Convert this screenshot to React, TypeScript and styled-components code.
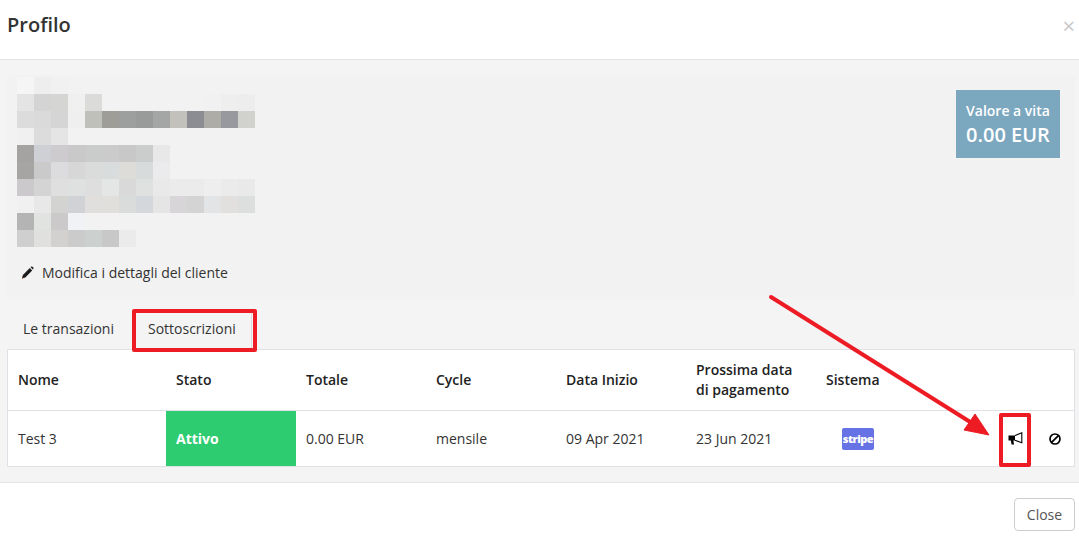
import React from "react";
import styled, { createGlobalStyle } from "styled-components";

const Global = createGlobalStyle`
  *, *::before, *::after { box-sizing: border-box; }
  html, body { margin: 0; padding: 0; background: #fff; }
  body { font-family: "Open Sans", "Liberation Sans", sans-serif; color: #2b2b2b; font-size: 14px; }
`;
const Modal = styled.div`
  position: relative;
  width: 1079px;
  height: 539px;
  overflow: hidden;
  display: flex;
  flex-direction: column;
  background: #fff;
`;
const Header = styled.header`
  height: 60px;
  flex: none;
  border-bottom: 1px solid #e5e5e5;
  display: flex;
  align-items: center;
  justify-content: space-between;
  padding: 0 4px 10px 7px;
`;
const Title = styled.h4`
  margin: 0;
  font-size: 20px;
  font-weight: 600;
  color: #333;
`;
const Dismiss = styled.span`
  font-size: 22px;
  line-height: 1;
  color: #c8c8c8;
`;
const Body = styled.main`
  height: 423px;
  flex: none;
  background: #f4f4f4;
  border-bottom: 1px solid #e5e5e5;
  padding: 15px 4px 0 7px;
  display: flex;
  flex-direction: column;
`;
const Customer = styled.section`
  height: 222px;
  flex: none;
  background: #f2f2f2;
  display: flex;
  justify-content: space-between;
  align-items: flex-start;
  padding: 2px 15px 0 10px;
`;
const CustomerInfo = styled.div`
  display: flex;
  flex-direction: column;
`;
const EditLink = styled.a`
  display: flex;
  align-items: center;
  gap: 8px;
  margin: 16px 0 0 4px;
  font-size: 14px;
  line-height: 19px;
  color: #333;
`;
const ValueBox = styled.div`
  width: 104px;
  height: 68px;
  margin-top: 13px;
  padding-bottom: 1px;
  background: #7ba7bf;
  color: #fff;
  text-align: center;
  font-weight: 600;
  display: flex;
  flex-direction: column;
  justify-content: center;
`;
const ValueLabel = styled.div`
  font-size: 14px;
  line-height: 21px;
`;
const ValueAmount = styled.div`
  font-size: 20px;
  line-height: 27px;
`;
const Tabs = styled.nav`
  height: 52px;
  flex: none;
  display: flex;
  align-items: flex-end;
`;
const Tab = styled.div<{ $active?: boolean }>`
  height: 40px;
  display: flex;
  align-items: center;
  padding: 0 15px 1px ${(p) => (p.$active ? "17px" : "16px")};
  margin-left: ${(p) => (p.$active ? "2px" : "0")};
  font-size: 14px;
  color: #333;
  border-right: ${(p) => (p.$active ? "1px solid #dcdce0" : "none")};
`;
const Table = styled.div`
  width: 1068px;
  height: 118px;
  flex: none;
  background: #fff;
  border: 1px solid #e0e0e6;
  display: flex;
  flex-direction: column;
`;
const columns = "158px 130px 130px 130px 130px 130px 130px 1fr";
const HeadRow = styled.div`
  height: 61px;
  flex: none;
  display: grid;
  grid-template-columns: ${columns};
  align-items: center;
  border-bottom: 1px solid #e0e0e6;
  font-size: 14px;
  font-weight: 600;
  color: #222;
`;
const DataRow = styled.div`
  flex: 1;
  display: grid;
  grid-template-columns: ${columns};
  align-items: center;
  font-size: 14px;
  color: #333;
`;
const HeadCell = styled.div`
  padding-left: 10px;
  line-height: 20px;
`;
const Cell = styled.div`
  padding-left: 10px;
`;
const StatusCell = styled.div`
  align-self: stretch;
  background: #2ecc71;
  color: #fff;
  font-weight: 700;
  display: flex;
  align-items: center;
  padding-left: 10px;
`;
const StripeBadge = styled.span`
  display: inline-flex;
  align-items: center;
  justify-content: center;
  width: 32px;
  height: 22px;
  margin-left: 16px;
  border-radius: 2px;
  background: #6772e5;
  color: #fff;
  font-family: "Open Sans", sans-serif;
  font-size: 11px;
  font-weight: 800;
  letter-spacing: -0.5px;
`;
const Actions = styled.div`
  display: flex;
  align-items: center;
  justify-content: flex-end;
  gap: 26px;
  padding-right: 13px;
`;
const Footer = styled.footer`
  flex: 1;
  display: flex;
  justify-content: flex-end;
  align-items: flex-start;
  padding: 15px 4px 0 0;
`;
const CloseButton = styled.button`
  width: 61px;
  height: 33px;
  padding: 0;
  background: #fff;
  border: 1px solid #ccc;
  border-radius: 4px;
  font: 400 14px "Open Sans", sans-serif;
  color: #555;
`;
const Annotation = styled.div<{ $x: number; $y: number; $w: number; $h: number }>`
  position: absolute;
  left: ${(p) => p.$x}px;
  top: ${(p) => p.$y}px;
  width: ${(p) => p.$w}px;
  height: ${(p) => p.$h}px;
  border: 4px solid #ed1c24;
  border-radius: 2px;
`;
const ArrowLayer = styled.svg`
  position: absolute;
  left: 0;
  top: 0;
  pointer-events: none;
`;

const mosaic: string[][] = [
  ["f5f5f5", "eeeeee", "f1f1f1"],
  ["e4e4e4", "d4d4d4", "d5d5d3", "f0f0f0", "dbdbd9", "", "", "", "", "", "", "f1f1f1", "eeeeee", "ededed"],
  ["dcdcdc", "dadada", "d5d5d5", "efefef", "c0c0bb", "9e9d97", "9d9f9e", "999b9b", "a4a6a5", "c2c1bc", "8c8d93", "aeaca6", "98999e", "d1d2cd"],
  ["f0f0f0", "dcdcdc", "e5e5e5"],
  ["a5a2a2", "cfd0d5", "cdcbcd", "c9c9c9", "cacccc", "cbcbcb", "c9c8c9", "cbcdcd", "e8e8e8"],
  ["a7a4a4", "cacaca", "dcdcdf", "d7d7d7", "dadcdc", "d9dcdc", "dedcd9", "d8dbdb", "ebebee"],
  ["cbc9cb", "d4d4d4", "dfdfdf", "dfe1e0", "dedede", "e3e6e5", "d9d9d9", "dfe1e1", "e9e9e9", "ebebeb", "ebebeb", "eeeeee", "ebebeb", "e9e9e9"],
  ["f0f0f0", "e8e8e8", "d3d3d1", "d0d2d5", "e0dfdd", "e0dfdc", "dadcdc", "d4d8dc", "e5e5e5", "d7d5d7", "d4d4d4", "e2e4e6", "e2e0de", "dcdfdd"],
  ["b4b4b4", "e0e3df", "cbc9c9", "f0f2f5"],
  ["cfcfcf", "e0e0de", "d2d1cf", "cbcbcb", "ccd0cf", "c8c8c8", "ebebeb"],
];

const Mosaic = () => (
  <svg width={238} height={170} shapeRendering="crispEdges" style={{ display: "block" }}>
    {mosaic.flatMap((row, y) =>
      row.map((c, x) =>
        c ? <rect key={`${x}-${y}`} x={x * 17} y={y * 17} width={17} height={17} fill={`#${c}`} /> : null
      )
    )}
  </svg>
);

const Pencil = () => (
  <svg width={13} height={13} viewBox="0 0 13 13">
    <path d="M1 12.5 L1.9 8.9 L8.8 2 L11.2 4.4 L4.3 11.4 Z" fill="#1c1c1c" />
    <path d="M9.6 1.2 L10.3 0.6 Q10.9 0.2 11.5 0.8 L12.3 1.6 Q12.8 2.2 12.4 2.8 L11.9 3.5 Z" fill="#1c1c1c" />
    <path d="M1 12.5 L1.4 10.8 L2.7 12.1 Z" fill="#9a3a22" />
  </svg>
);

const Bullhorn = () => (
  <svg width={15} height={13} viewBox="0 0 15 13">
    <path d="M0.5 3.4 H7 V8.4 H5.4 L6 12.4 H3.6 L2.8 8.4 H0.5 Z" fill="#000" />
    <path d="M7 3.6 L13.8 0.8 V10.8 L7 8.2" fill="none" stroke="#000" strokeWidth="1.1" />
  </svg>
);

const Ban = () => (
  <svg width={12} height={12} viewBox="0 0 12 12">
    <circle cx="6" cy="6" r="5" fill="none" stroke="#000" strokeWidth="1.7" />
    <path d="M2.6 9.4 L9.4 2.6" stroke="#000" strokeWidth="1.7" />
  </svg>
);

export default function App() {
  return (
    <Modal>
      <Global />
      <Header>
        <Title>Profilo</Title>
        <Dismiss>×</Dismiss>
      </Header>
      <Body>
        <Customer>
          <CustomerInfo>
            <Mosaic />
            <EditLink>
              <Pencil />
              Modifica i dettagli del cliente
            </EditLink>
          </CustomerInfo>
          <ValueBox>
            <ValueLabel>Valore a vita</ValueLabel>
            <ValueAmount>0.00 EUR</ValueAmount>
          </ValueBox>
        </Customer>
        <Tabs>
          <Tab>Le transazioni</Tab>
          <Tab $active>Sottoscrizioni</Tab>
        </Tabs>
        <Table>
          <HeadRow>
            <HeadCell>Nome</HeadCell>
            <HeadCell>Stato</HeadCell>
            <HeadCell>Totale</HeadCell>
            <HeadCell>Cycle</HeadCell>
            <HeadCell>Data Inizio</HeadCell>
            <HeadCell>
              Prossima data
              <br />
              di pagamento
            </HeadCell>
            <HeadCell>Sistema</HeadCell>
            <HeadCell />
          </HeadRow>
          <DataRow>
            <Cell>Test 3</Cell>
            <StatusCell>Attivo</StatusCell>
            <Cell>0.00 EUR</Cell>
            <Cell>mensile</Cell>
            <Cell>09 Apr 2021</Cell>
            <Cell>23 Jun 2021</Cell>
            <Cell>
              <StripeBadge>stripe</StripeBadge>
            </Cell>
            <Actions>
              <Bullhorn />
              <Ban />
            </Actions>
          </DataRow>
        </Table>
      </Body>
      <Footer>
        <CloseButton>Close</CloseButton>
      </Footer>
      <Annotation $x={132} $y={309} $w={125} $h={43} />
      <Annotation $x={999} $y={413} $w={32} $h={54} />
      <ArrowLayer width={1079} height={539}>
        <line x1={771} y1={297} x2={975} y2={425} stroke="#ed1c24" strokeWidth={4} strokeLinecap="round" />
        <path d="M989 435 L964 430 L975 414 Z" fill="#ed1c24" stroke="#ed1c24" strokeWidth={1} />
      </ArrowLayer>
    </Modal>
  );
}
